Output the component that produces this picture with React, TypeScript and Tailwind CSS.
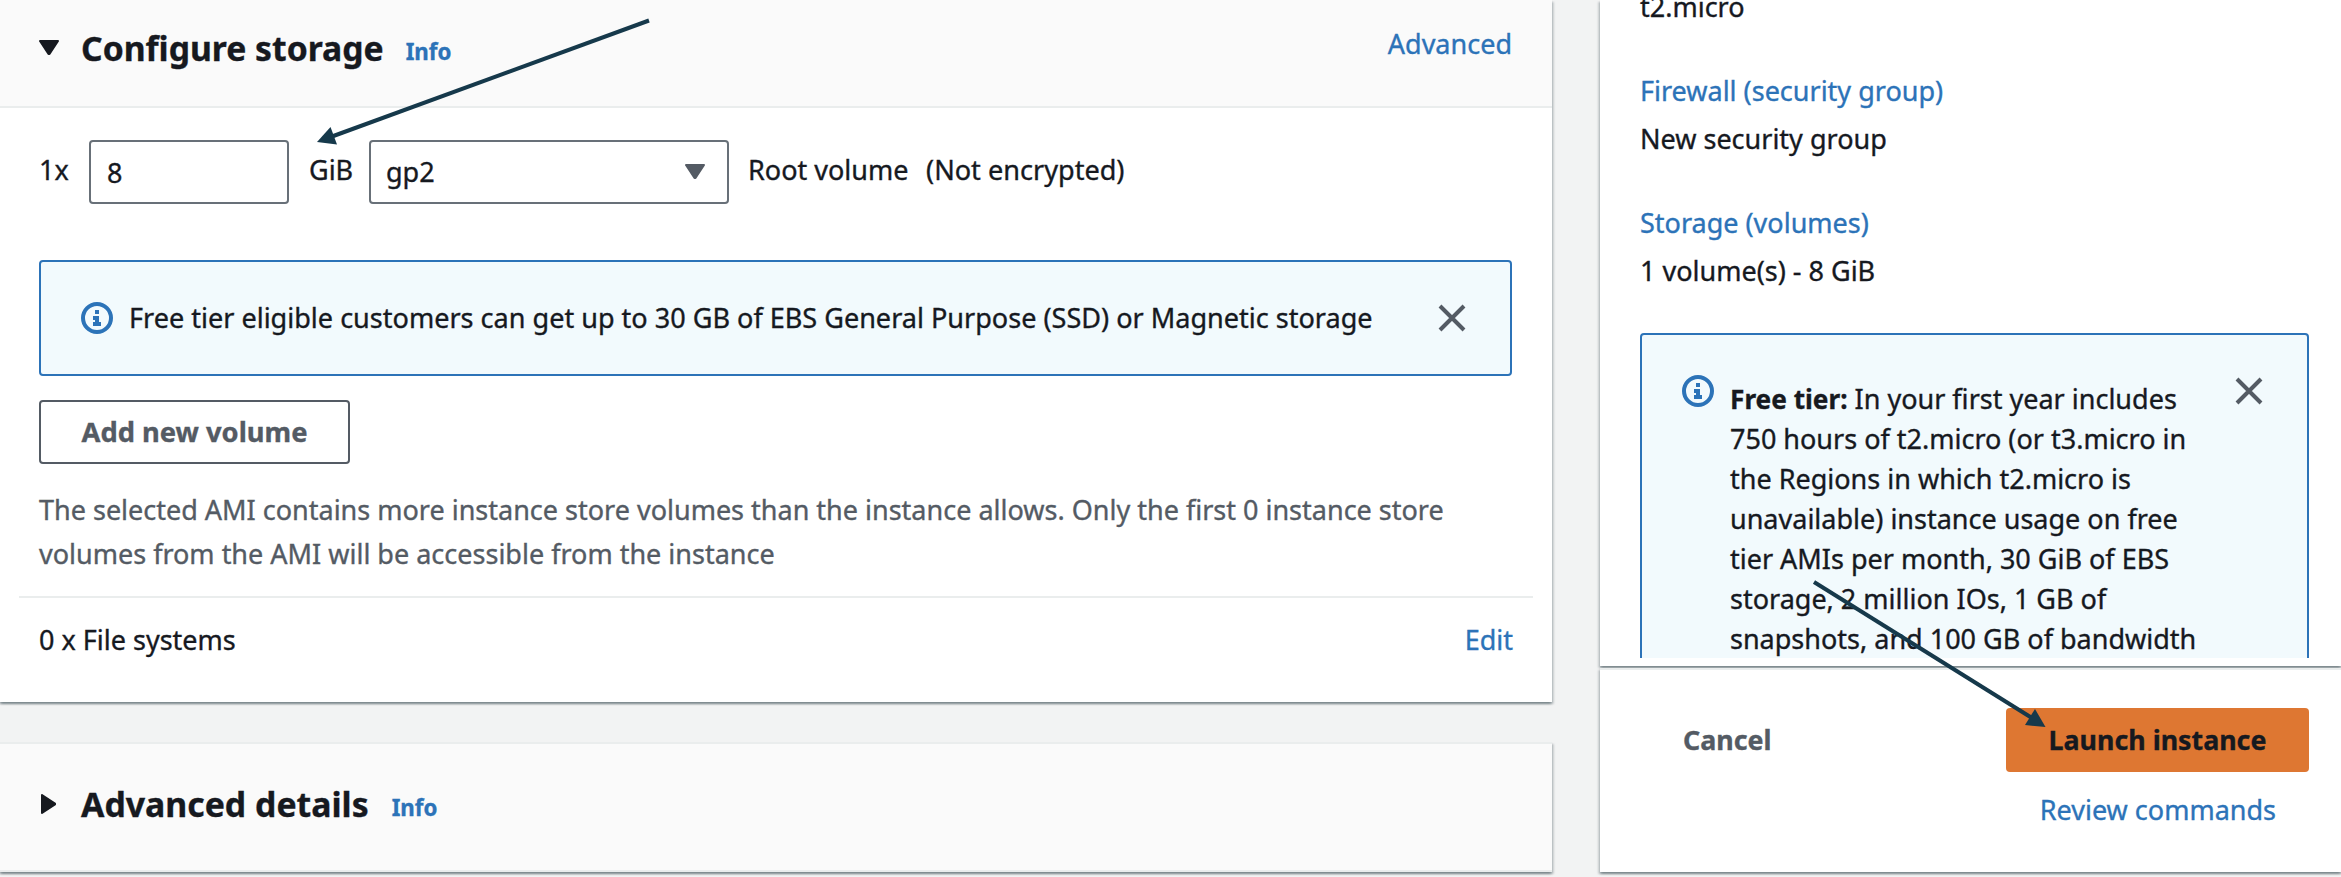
import type { ReactNode } from "react";

const LINK = "text-[#2c73b8]";

function Caret({ dir, className }: { dir: "down" | "right"; className?: string }) {
  return (
    <svg width="20" height="20" viewBox="0 0 20 20" className={className} fill="currentColor" stroke="currentColor" strokeWidth="2" strokeLinejoin="round">
      {dir === "down" ? <path d="M1 3h18l-8.500 13h-1z" /> : <path d="M3 1v18l13-8.500v-1z" />}
    </svg>
  );
}

function InfoIcon({ className }: { className?: string }) {
  return (
    <svg width="32" height="32" viewBox="0 0 32 32" className={className} fill="none">
      <circle cx="16" cy="16" r="14" stroke="#2c73b8" strokeWidth="4" />
      <path d="M14 8h4v4h-4zM12 14h6v6h2v4h-8v-4h2v-2h-2z" fill="#2c73b8" />
    </svg>
  );
}

function CloseIcon({ className }: { className?: string }) {
  return (
    <svg width="28" height="28" viewBox="0 0 28 28" className={className} fill="none" stroke="#545b64" strokeWidth="4">
      <path d="M2 2l24 24M26 2L2 26" />
    </svg>
  );
}

function Card({ className, children }: { className?: string; children: ReactNode }) {
  return (
    <section
      className={`bg-white shadow-[0_2px_2px_0_rgba(0,28,36,0.3),2px_2px_2px_0_rgba(0,28,36,0.15),-2px_2px_2px_0_rgba(0,28,36,0.15)] ${className ?? ""}`}
    >
      {children}
    </section>
  );
}

function StoragePanel() {
  return (
    <Card className="h-[702px] w-[1552px] shrink-0">
      <header className="flex h-[108px] items-start justify-between border-b-2 border-[#eaeded] bg-[#fafafa] pr-10 pl-[39px]">
        <div className="flex items-start">
          <Caret dir="down" className="mt-[38px]" />
          <h2 className="ml-[22px] pt-[26px] text-[33.7px] leading-[44px] font-bold">Configure storage</h2>
          <a className={`ml-[22px] pt-[30px] text-[22.3px] leading-[44px] font-bold ${LINK}`}>Info</a>
        </div>
        <a className={`pt-[22px] leading-[44px] ${LINK}`}>Advanced</a>
      </header>

      <div className="flex h-[96px] items-end pl-[39px]">
        <span className="w-[50px] pb-[12px] leading-[44px]">1x</span>
        <div className="h-[64px] w-[200px] rounded-[4px] border-2 border-[#687078] pt-[9px] pl-[16px] leading-[44px]">8</div>
        <span className="ml-[20px] w-[60px] pb-[12px] leading-[44px]">GiB</span>
        <div className="flex h-[64px] w-[360px] items-start justify-between rounded-[4px] border-2 border-[#687078] pt-[8px] pr-[22px] pl-[15px] leading-[44px]">
          gp2
          <Caret dir="down" className="mt-[12px] text-[#545b64]" />
        </div>
        <span className="ml-[19px] w-[178px] pb-[12px] leading-[44px]">Root volume</span>
        <span className="pb-[12px] text-[27.1px] leading-[44px]">(Not encrypted)</span>
      </div>

      <div className="mt-[56px] ml-[39px] flex h-[116px] w-[1473px] items-start rounded-[4px] border-2 border-[#2c73b8] bg-[#f2fafd]">
        <InfoIcon className="mt-[40px] ml-[40px]" />
        <p className="mt-[34px] ml-[16px] text-[27.05px] leading-[44px] whitespace-nowrap">
          Free tier eligible customers can get up to 30 GB of EBS General Purpose (SSD) or Magnetic storage
        </p>
        <CloseIcon className="mt-[42px] mr-[44px] ml-auto" />
      </div>

      <button className="mt-[24px] ml-[39px] block h-[64px] w-[311px] rounded-[4px] border-2 border-[#545b64] pb-[1px] text-[27.3px] leading-[40px] font-bold text-[#545b64]">
        Add new volume
      </button>

      <p className="mt-[24px] ml-[39px] w-[1450px] leading-[44px] text-[#545b64]">
        The selected AMI contains more instance store volumes than the instance allows. Only the first 0 instance store
        volumes from the AMI will be accessible from the instance
      </p>

      <div className="mx-[19px] mt-[20px] flex justify-between border-t-2 border-[#eaeded] px-5 pt-[20px] leading-[44px]">
        <span>0 x File systems</span>
        <a className={LINK}>Edit</a>
      </div>
    </Card>
  );
}

function AdvancedPanel() {
  return (
    <Card className="mt-[40px] flex h-[130px] w-[1552px] shrink-0 items-start border-y-2 border-[#eaeded] bg-[#fafafa]! pl-[39px]">
      <Caret dir="right" className="mt-[50px]" />
      <h2 className="ml-[22px] pt-[38px] text-[33.8px] leading-[44px] font-bold">Advanced details</h2>
      <a className={`ml-[23px] pt-[42px] text-[22.3px] leading-[44px] font-bold ${LINK}`}>Info</a>
    </Card>
  );
}

function SummaryItem({ label, value }: { label: string; value: string }) {
  return (
    <div className="mb-[40px]">
      <a className={`block leading-[44px] ${LINK}`}>{label}</a>
      <div className="pt-[4px] leading-[44px]">{value}</div>
    </div>
  );
}

function SummaryPanel() {
  return (
    <Card className="h-[666px] shrink-0 overflow-hidden">
      <div className="h-[658px] overflow-hidden pl-[40px]">
        <div className="-mt-[15px] mb-[40px] leading-[44px]">t2.micro</div>
        <SummaryItem label="Firewall (security group)" value="New security group" />
        <SummaryItem label="Storage (volumes)" value="1 volume(s) - 8 GiB" />
        <div className="mt-[40px] flex h-[400px] w-[669px] items-start rounded-[4px] border-2 border-[#2c73b8] bg-[#f2fafd]">
          <InfoIcon className="mt-[40px] ml-[40px] shrink-0" />
          <p className="mt-[44px] ml-[16px] w-[490px] shrink-0 leading-[40px] whitespace-nowrap">
            <strong className="text-[26.2px]">Free tier:</strong> In your first year includes
            <br />
            750 hours of t2.micro (or t3.micro in
            <br />
            the Regions in which t2.micro is
            <br />
            unavailable) instance usage on free
            <br />
            tier AMIs per month, 30 GiB of EBS
            <br />
            storage, 2 million IOs, 1 GB of
            <br />
            snapshots, and 100 GB of bandwidth
          </p>
          <CloseIcon className="mt-[42px] ml-[15px] shrink-0" />
        </div>
      </div>
    </Card>
  );
}

function SummaryFooter() {
  return (
    <Card className="mt-[2px] h-[204px] shrink-0 border-t-2 border-[#eaeded] pr-[32px] pl-[83px]">
      <div className="flex items-start justify-between pt-[38px]">
        <button className="pt-[10px] text-[26.8px] leading-[44px] font-bold text-[#545b64]">Cancel</button>
        <button className="h-[64px] w-[303px] rounded-[4px] bg-[#de7732] text-[26.8px] leading-[44px] font-bold">
          Launch instance
        </button>
      </div>
      <div className="pt-[16px] pr-[33px] text-right">
        <a className={`leading-[44px] ${LINK}`}>Review commands</a>
      </div>
    </Card>
  );
}

function Arrows() {
  return (
    <svg className="pointer-events-none absolute inset-0" width="2341" height="877" viewBox="0 0 2341 877" fill="#16394b" stroke="#16394b">
      <path d="M649 20.500L332 136.500" strokeWidth="4" />
      <path d="M317 142l13.500-15 6.500 17.500z" strokeWidth="0" />
      <path d="M1814 582L2032 718" strokeWidth="4" />
      <path d="M2045.500 727l-20.500-2 10-16z" strokeWidth="0" />
    </svg>
  );
}

export default function App() {
  return (
    <div className="relative flex h-[877px] w-[2341px] overflow-hidden bg-[#f2f3f3] font-['Noto_Sans',sans-serif] text-[27px] text-[#16191f] [-webkit-text-stroke:0.35px_currentColor]">
      <main className="flex w-[1600px] shrink-0 flex-col">
        <StoragePanel />
        <AdvancedPanel />
      </main>
      <aside className="flex w-[741px] shrink-0 flex-col">
        <SummaryPanel />
        <SummaryFooter />
      </aside>
      <Arrows />
    </div>
  );
}
